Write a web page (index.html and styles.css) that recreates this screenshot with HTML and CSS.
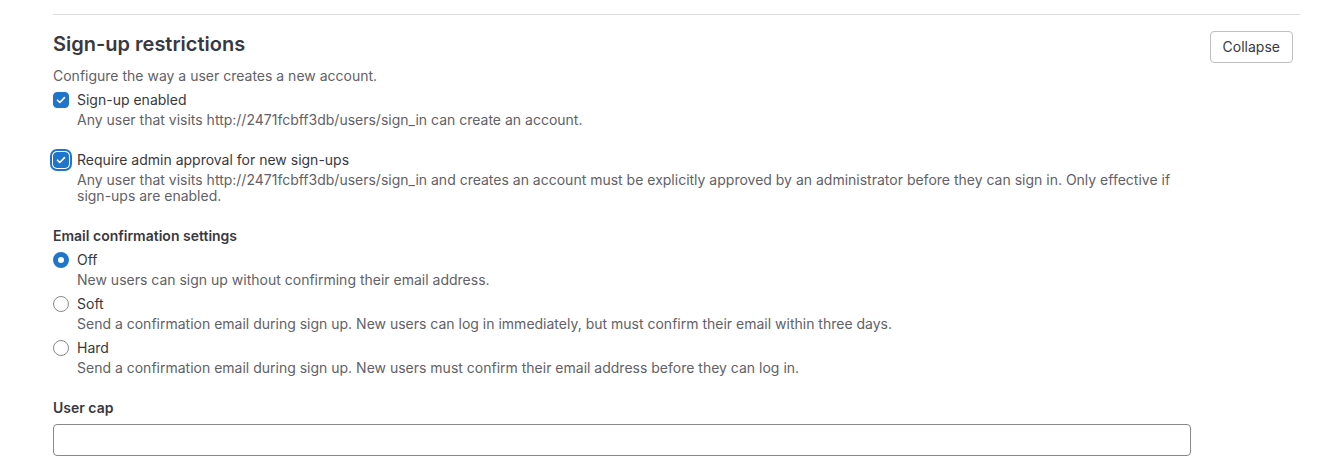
FILE: index.html
```html
<!DOCTYPE html>
<html lang="en">
<head>
<meta charset="utf-8">
<title>Sign-up restrictions</title>
<link rel="stylesheet" href="styles.css">
</head>
<body>
<div class="page">
  <section class="settings">
    <div class="settings-header">
      <div class="header-text">
        <h4 class="settings-title">Sign-up restrictions</h4>
        <p class="settings-desc">Configure the way a user creates a new account.</p>
      </div>
      <button class="btn" type="button">Collapse</button>
    </div>
    <div class="settings-content">
      <div class="form-group">
        <div class="check">
          <span class="box checked">
            <svg viewBox="0 0 16 16" width="16" height="16"><path d="M4.5 8.2l2.3 2.3 4.7-4.9" fill="none" stroke="#fff" stroke-width="1.6" stroke-linecap="round" stroke-linejoin="round"/></svg>
          </span>
          <div class="check-body">
            <div class="check-label">Sign-up enabled</div>
            <div class="help">Any user that visits http://2471fcbff3db/users/sign_in can create an account.</div>
          </div>
        </div>
      </div>
      <div class="form-group">
        <div class="check">
          <span class="box checked focused">
            <svg viewBox="0 0 16 16" width="16" height="16"><path d="M4.5 8.2l2.3 2.3 4.7-4.9" fill="none" stroke="#fff" stroke-width="1.6" stroke-linecap="round" stroke-linejoin="round"/></svg>
          </span>
          <div class="check-body">
            <div class="check-label">Require admin approval for new sign-ups</div>
            <div class="help">Any user that visits http://2471fcbff3db/users/sign_in and creates an account must be explicitly approved by an administrator before they can sign in. Only effective if sign-ups are enabled.</div>
          </div>
        </div>
      </div>
      <div class="form-group">
        <div class="legend">Email confirmation settings</div>
        <div class="check">
          <span class="radio checked"></span>
          <div class="check-body">
            <div class="check-label">Off</div>
            <div class="help">New users can sign up without confirming their email address.</div>
          </div>
        </div>
        <div class="check">
          <span class="radio"></span>
          <div class="check-body">
            <div class="check-label">Soft</div>
            <div class="help">Send a confirmation email during sign up. New users can log in immediately, but must confirm their email within three days.</div>
          </div>
        </div>
        <div class="check">
          <span class="radio"></span>
          <div class="check-body">
            <div class="check-label">Hard</div>
            <div class="help">Send a confirmation email during sign up. New users must confirm their email address before they can log in.</div>
          </div>
        </div>
      </div>
      <div class="form-group">
        <label class="field-label" for="user-cap">User cap</label>
        <input class="input" id="user-cap" type="text">
      </div>
    </div>
  </section>
</div>
</body>
</html>
```

FILE: styles.css
```css
* { box-sizing: border-box; }
html, body { margin: 0; padding: 0; background: #fff; }
body {
  font-family: Inter, "Noto Sans", "Liberation Sans", sans-serif;
  font-size: 14px;
  line-height: 20px;
  color: #3a383f;
}
.page {
  padding: 14px 28px 0 53px;
}
.settings {
  border-top: 1px solid #dcdcde;
}
.settings-header {
  display: flex;
  justify-content: space-between;
  align-items: flex-start;
  padding: 17px 7px 0 0;
}
.settings-title {
  margin: 0;
  font-size: 20px;
  line-height: 24px;
  font-weight: 600;
  color: #3a383f;
}
.settings-desc {
  margin: 10px 0 0;
  color: #626168;
}
.btn {
  margin-top: -1px;
  height: 32px;
  padding: 0 12px;
  font: inherit;
  font-size: 14px;
  color: #3a383f;
  background: #fff;
  border: 1px solid #bfbfc3;
  border-radius: 4px;
}
.settings-content {
  width: 1138px;
  margin-top: 4px;
}
.form-group {
  display: flow-root;
  margin-bottom: 16px;
}
.check {
  display: flex;
  align-items: flex-start;
  gap: 8px;
  margin-bottom: 6px;
}
.box, .radio {
  flex: 0 0 16px;
  width: 16px;
  height: 16px;
  margin-top: 2px;
  position: relative;
}
.box {
  border-radius: 4px;
  border: 1px solid #89888d;
}
.box svg { position: absolute; left: -1px; top: -1px; }
.box.checked {
  background: #1f75cb;
  border-color: #1f75cb;
}
.box.focused {
  box-shadow: 0 0 0 1px #fff, 0 0 0 3px #1f75cb;
}
.radio {
  border-radius: 50%;
  border: 1px solid #89888d;
  background: #fff;
}
.radio.checked {
  border: 5px solid #1f75cb;
  background: #fff;
}
.check-label {
  line-height: 20px;
}
.help {
  margin-top: 2px;
  line-height: 16px;
  color: #626168;
}
.legend {
  font-weight: 600;
  margin-bottom: 4px;
}
.field-label {
  display: block;
  font-weight: 600;
  margin-bottom: 6px;
}
.input {
  display: block;
  width: 100%;
  height: 32px;
  border: 1px solid #89888d;
  border-radius: 4px;
  font: inherit;
  padding: 0 12px;
  background: #fff;
}
```
